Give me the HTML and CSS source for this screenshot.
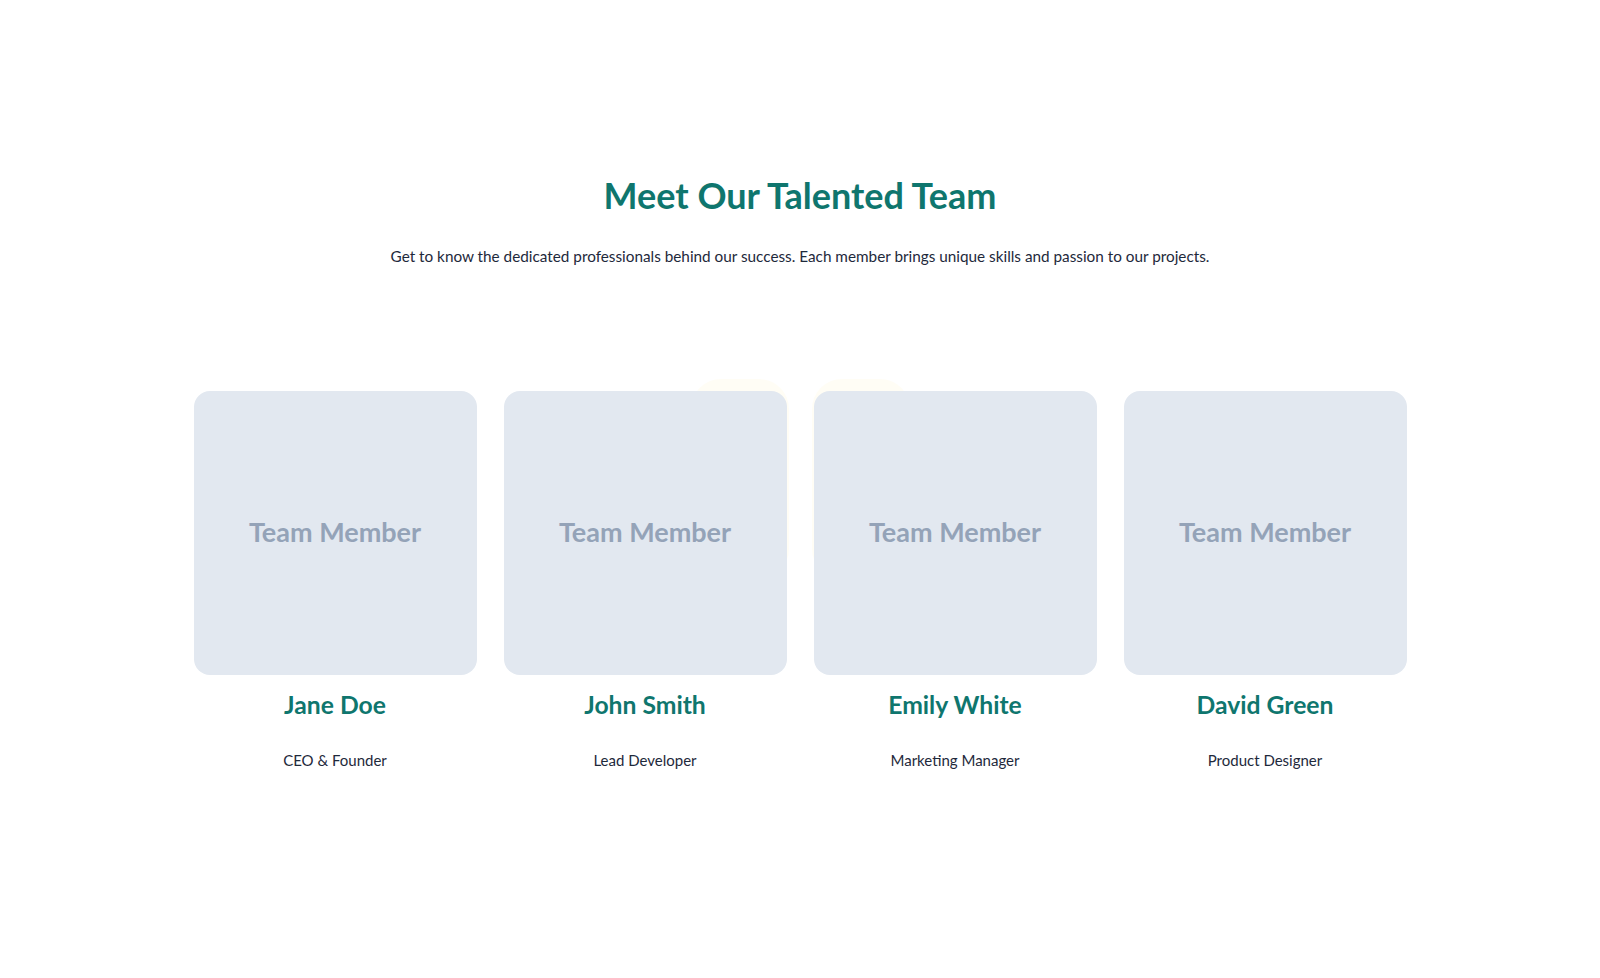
FILE: index.html
```html
<!DOCTYPE html>
<html lang="en">
<head>
<meta charset="utf-8">
<title>Meet Our Talented Team</title>
<link rel="stylesheet" href="styles.css">
</head>
<body>
<section class="team">
  <h1 class="team-title">Meet Our Talented Team</h1>
  <p class="team-intro">Get to know the dedicated professionals behind our success. Each member brings unique skills and passion to our projects.</p>
  <div class="team-grid">
    <div class="blob blob-a"></div>
    <div class="blob blob-b"></div>
    <article class="member">
      <div class="photo"><span>Team Member</span></div>
      <h2 class="member-name">Jane Doe</h2>
      <p class="member-role">CEO &amp; Founder</p>
    </article>
    <article class="member">
      <div class="photo"><span>Team Member</span></div>
      <h2 class="member-name">John Smith</h2>
      <p class="member-role">Lead Developer</p>
    </article>
    <article class="member">
      <div class="photo"><span>Team Member</span></div>
      <h2 class="member-name">Emily White</h2>
      <p class="member-role">Marketing Manager</p>
    </article>
    <article class="member">
      <div class="photo"><span>Team Member</span></div>
      <h2 class="member-name">David Green</h2>
      <p class="member-role">Product Designer</p>
    </article>
  </div>
</section>
</body>
</html>
```

FILE: styles.css
```css
* { box-sizing: border-box; }

html, body {
  margin: 0;
  padding: 0;
  background: #ffffff;
}

body {
  font-family: "Lato", "Noto Sans", sans-serif;
  color: #1e293b;
}

.team {
  padding-top: 173px;
  display: flex;
  flex-direction: column;
  align-items: center;
}

.team-title {
  margin: 0;
  font-size: 36px;
  line-height: 44px;
  font-weight: 700;
  color: #0f766e;
}

.team-intro {
  margin: 27px 0 0;
  font-size: 15.3px;
  line-height: 24px;
  color: #1e293b;
}

.team-grid {
  position: relative;
  margin-top: 123px;
  width: 1213px;
  display: grid;
  grid-template-columns: repeat(4, 1fr);
  column-gap: 27px;
}

.blob {
  position: absolute;
  top: -12px;
  width: 98px;
  height: 200px;
  border-radius: 30px;
  background: #fffcf2;
  opacity: 0.8;
  z-index: 0;
}

.blob-a { left: 497px; }
.blob-b { left: 618px; }

.member {
  position: relative;
  z-index: 1;
  display: flex;
  flex-direction: column;
  align-items: center;
}

.photo {
  width: 100%;
  height: 284px;
  padding-bottom: 3px;
  background: #e2e8f0;
  border-radius: 16px;
  display: flex;
  align-items: center;
  justify-content: center;
}

.photo span {
  font-family: "Lato", sans-serif;
  font-weight: 700;
  font-size: 27px;
  color: #94a3b8;
}

.member-name {
  margin: 14px 0 0;
  font-size: 24.7px;
  line-height: 32px;
  font-weight: 700;
  color: #0f766e;
}

.member-role {
  margin: 27px 0 0;
  font-size: 15px;
  line-height: 24px;
  color: #1e293b;
}
```
